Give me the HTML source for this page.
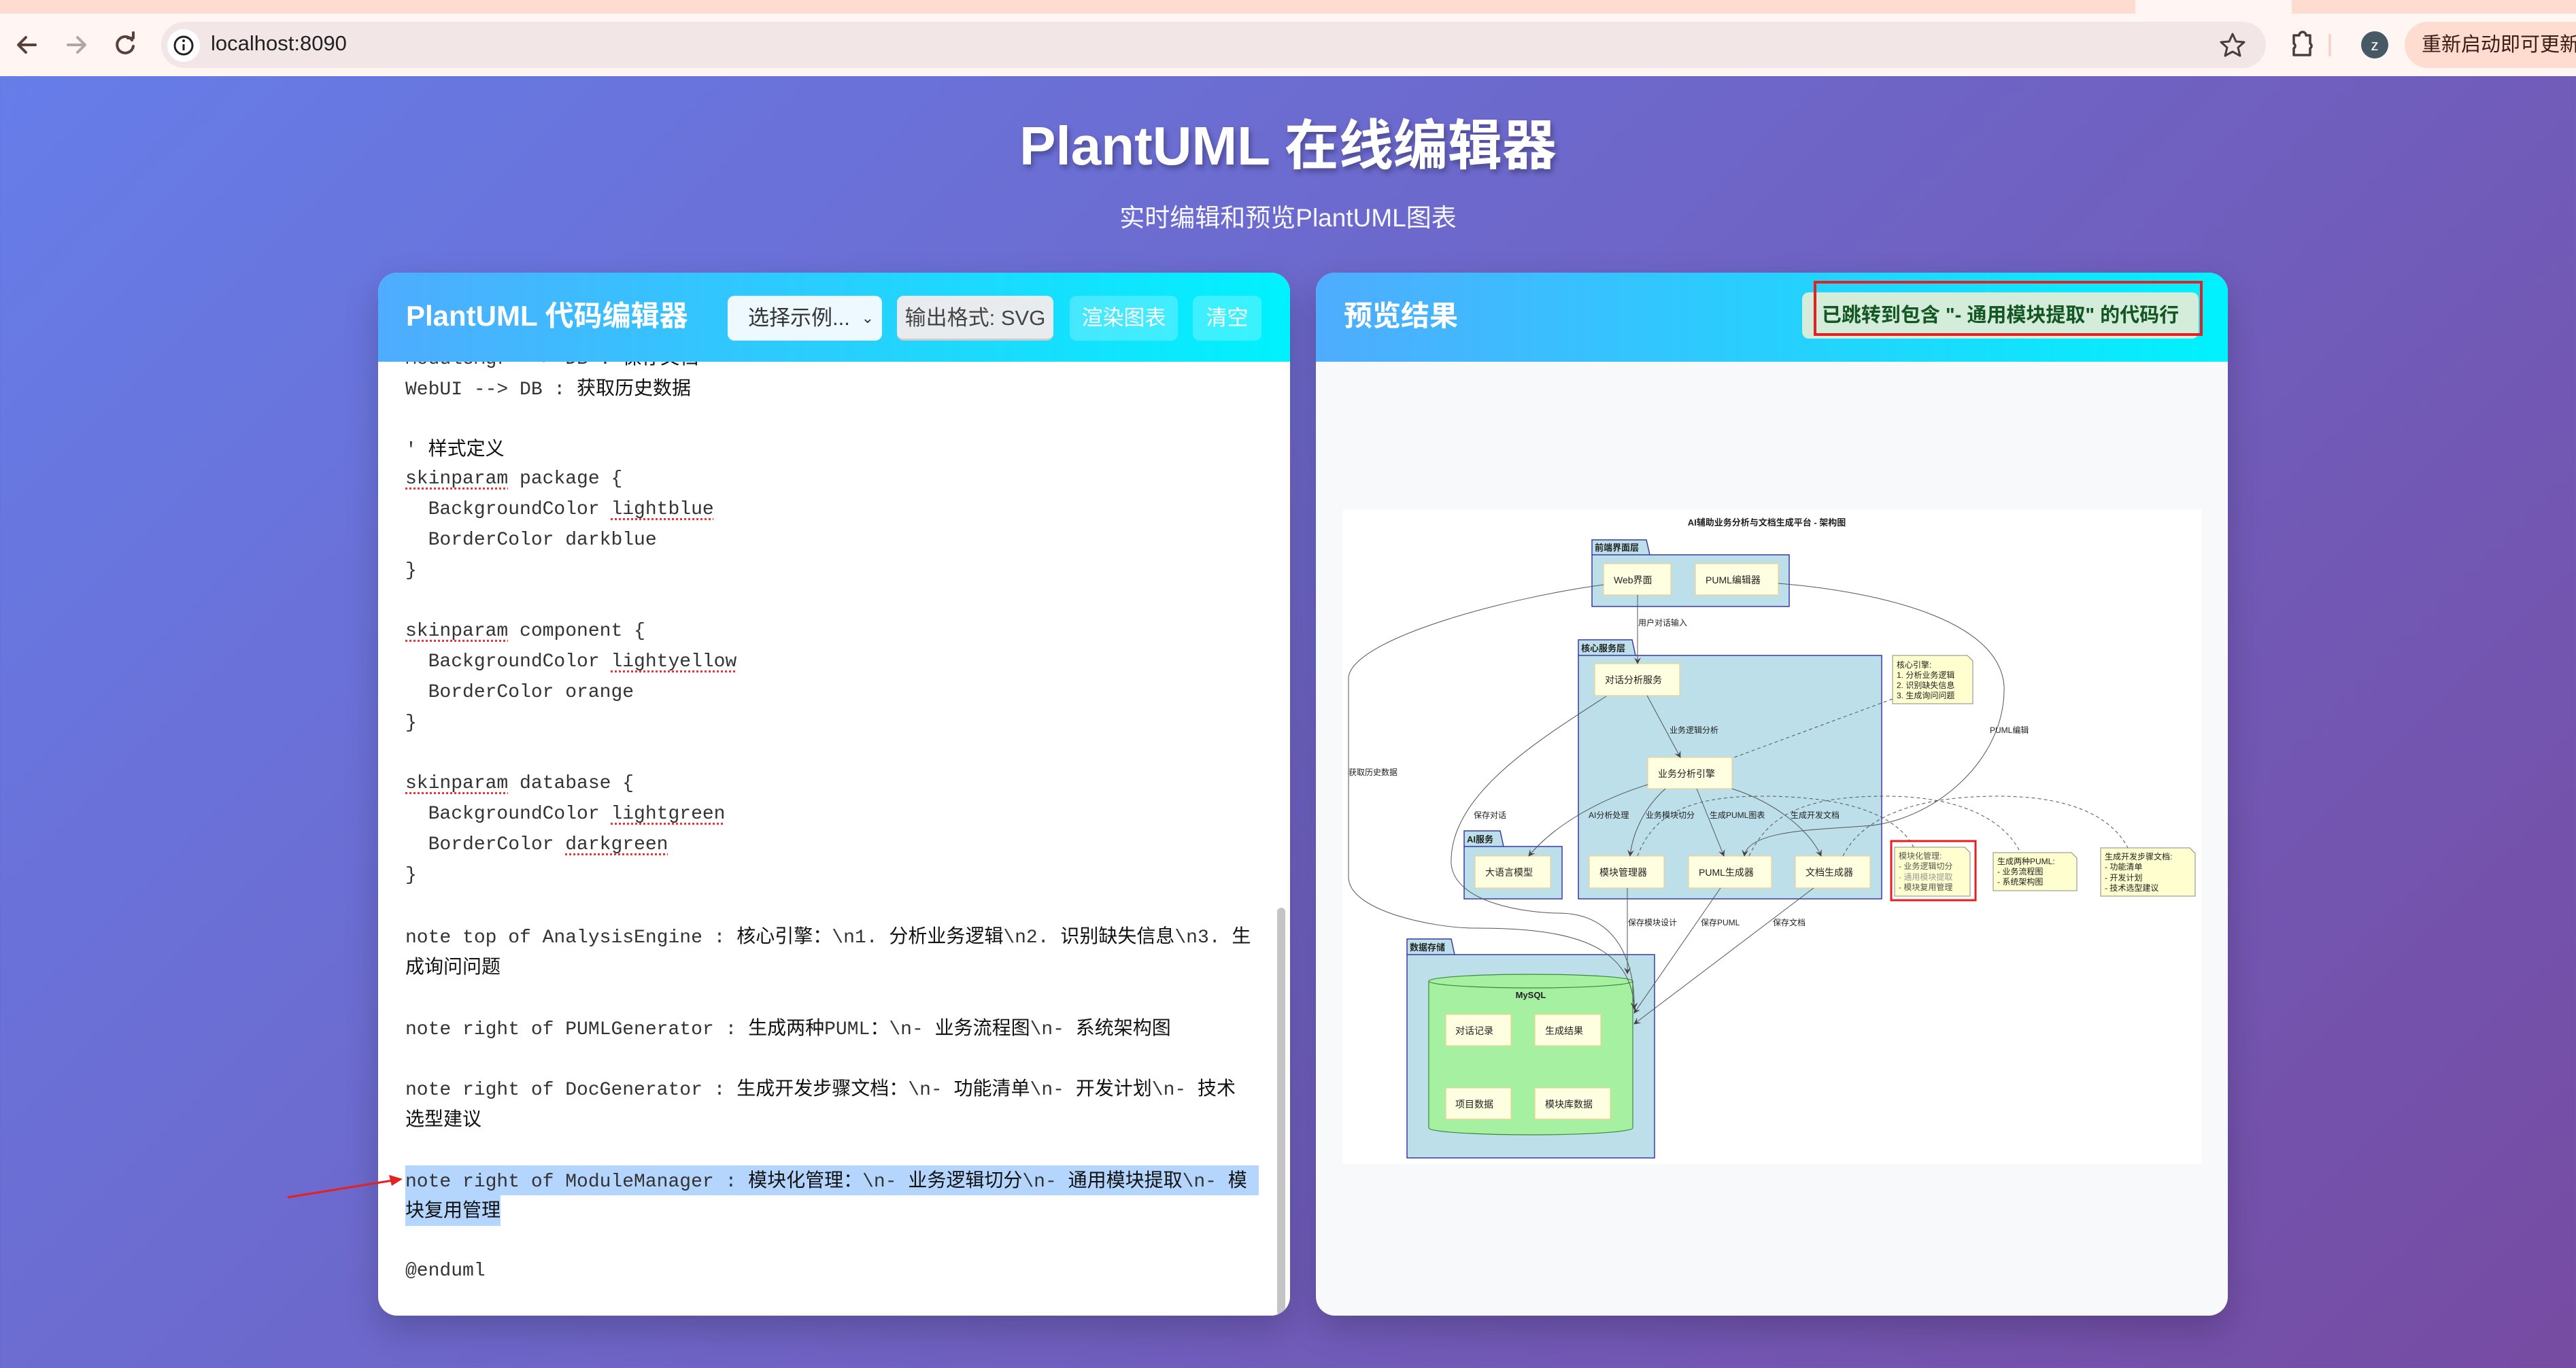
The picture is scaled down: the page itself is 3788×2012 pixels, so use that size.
<!DOCTYPE html>
<html><head><meta charset="utf-8">
<style>
*{margin:0;padding:0;box-sizing:border-box}
html,body{width:3788px;height:2012px;overflow:hidden}
body{position:relative;font-family:"Liberation Sans","Noto Sans CJK SC",sans-serif;background:linear-gradient(135deg,#667eea 0%,#764ba2 100%)}
.abs{position:absolute}
.tabs{left:0;top:0;width:3788px;height:20px;background:#fedcd0}
.toolbar{left:0;top:20px;width:3788px;height:92px;background:#fff6f4}
.url{left:237px;top:32px;width:3095px;height:68px;border-radius:34px;background:#f2e7e6}
.urltext{left:310px;top:46px;font-size:31px;color:#222}
.upd{left:3536px;top:32px;width:280px;height:68px;border-radius:34px;background:#fedcd0;color:#3a1c14;font-size:29px;line-height:68px;padding-left:25px}
h1{position:absolute;left:0;width:3788px;top:150px;text-align:center;color:#fff;font-size:80px;font-weight:bold;text-shadow:3px 5px 8px rgba(0,0,0,.3)}
.sub{left:0;width:3788px;top:290px;text-align:center;color:#fff;font-size:37px;opacity:.95}
.panel{top:401px;height:1534px;border-radius:28px;overflow:hidden;background:#fff;box-shadow:0 20px 50px rgba(0,0,0,.2)}
.ph{position:absolute;left:0;top:0;width:100%;height:131px;background:linear-gradient(90deg,#4facfe,#00f2fe)}
.pt{position:absolute;top:30px;color:#fff;font-size:42px;font-weight:bold}
.btn{position:absolute;top:34px;height:66px;border-radius:10px;font-size:31px;line-height:66px;text-align:center}
.code{position:absolute;left:40px;top:131px;width:1285px;height:1403px;overflow:hidden}
.lines{position:absolute;left:0;top:-28px;font-family:"Liberation Mono","Noto Sans CJK SC",monospace;font-size:28px;color:#333}
.lines div{height:44.8px;line-height:44.8px;white-space:pre;overflow:visible}
.cj{font-family:"Liberation Sans","Noto Sans CJK SC",sans-serif;color:#111}
.sq{text-decoration:underline dotted #e33;text-underline-offset:6px;text-decoration-thickness:3px}
.hl{background:#b4d5fe}
</style></head><body>
<div class="abs tabs"></div>
<div class="abs" style="left:3140px;top:0;width:230px;height:20px;background:#fff6f4"></div>
<div class="abs toolbar"></div>
<svg class="abs" style="left:0;top:20px" width="240" height="92">
<g fill="none" stroke-width="4" stroke-linecap="round" stroke-linejoin="round">
<path d="M52 46H28M38 35L27 46L38 57" stroke="#5a4038"/>
<path d="M100 46H124M114 35L125 46L114 57" stroke="#b0a6a4"/>
<path d="M194 39A12 12 0 1 0 196 48" stroke="#5a4038"/><path d="M188 36H196V28" stroke="#5a4038"/>
</g></svg>
<div class="abs url"></div>
<div class="abs" style="left:246px;top:43px;width:48px;height:48px;border-radius:24px;background:#fff"></div>
<svg class="abs" style="left:246px;top:43px" width="48" height="48"><circle cx="24" cy="24" r="13" fill="none" stroke="#222" stroke-width="3"/><path d="M24 22V31" stroke="#222" stroke-width="3"/><circle cx="24" cy="17" r="2" fill="#222"/></svg>
<div class="abs urltext">localhost:8090</div>
<svg class="abs" style="left:3260px;top:40px" width="260" height="52">
<path d="M23 10L28 21L40 22L31 30L34 42L23 36L12 42L15 30L6 22L18 21Z" fill="none" stroke="#4a3e3b" stroke-width="3" stroke-linejoin="round"/>
<path d="M113 12H121A5 5 0 0 1 131 12H137V24A4 4 0 0 1 137 31V41H113V31A4 4 0 0 0 113 24Z" fill="none" stroke="#4a3e3b" stroke-width="3.5" stroke-linejoin="round"/>
<rect x="164" y="10" width="4" height="33" rx="2" fill="#f6d6cc"/>
<circle cx="232" cy="26" r="20" fill="#455a64"/><text x="232" y="34" fill="#fff" font-size="22" text-anchor="middle" font-family="Liberation Sans">z</text>
</svg>
<div class="abs upd">重新启动即可更新</div>

<h1>PlantUML 在线编辑器</h1>
<div class="abs sub">实时编辑和预览PlantUML图表</div>

<div class="abs panel" style="left:556px;width:1341px">
 <div class="ph">
  <div class="pt" style="left:41px">PlantUML 代码编辑器</div>
  <div class="btn" style="left:514px;width:227px;background:#eef9ff;color:#333;text-align:left;padding-left:30px">选择示例...<span style="position:absolute;right:12px;font-size:22px">&#8964;</span></div>
  <div class="btn" style="left:763px;width:230px;background:#e9ecef;color:#444;border-bottom:3px solid #ccc">输出格式: SVG</div>
  <div class="btn" style="left:1017px;width:159px;background:rgba(255,255,255,.22);color:#fff">渲染图表</div>
  <div class="btn" style="left:1198px;width:101px;background:rgba(255,255,255,.22);color:#fff">清空</div>
 </div>
 <div class="code"><div class="lines">
<div>ModuleMgr --&gt; DB : <span class="cj">保存文档</span></div>
<div>WebUI --&gt; DB : <span class="cj">获取历史数据</span></div>
<div></div>
<div>' <span class="cj">样式定义</span></div>
<div><span class="sq">skinparam</span> package {</div>
<div>  BackgroundColor <span class="sq">lightblue</span></div>
<div>  BorderColor darkblue</div>
<div>}</div>
<div></div>
<div><span class="sq">skinparam</span> component {</div>
<div>  BackgroundColor <span class="sq">lightyellow</span></div>
<div>  BorderColor orange</div>
<div>}</div>
<div></div>
<div><span class="sq">skinparam</span> database {</div>
<div>  BackgroundColor <span class="sq">lightgreen</span></div>
<div>  BorderColor <span class="sq">darkgreen</span></div>
<div>}</div>
<div></div>
<div>note top of AnalysisEngine : <span class="cj">核心引擎：</span>\n1. <span class="cj">分析业务逻辑</span>\n2. <span class="cj">识别缺失信息</span>\n3. <span class="cj">生</span></div>
<div><span class="cj">成询问问题</span></div>
<div></div>
<div>note right of PUMLGenerator : <span class="cj">生成两种</span>PUML<span class="cj">：</span>\n- <span class="cj">业务流程图</span>\n- <span class="cj">系统架构图</span></div>
<div></div>
<div>note right of DocGenerator : <span class="cj">生成开发步骤文档：</span>\n- <span class="cj">功能清单</span>\n- <span class="cj">开发计划</span>\n- <span class="cj">技术</span></div>
<div><span class="cj">选型建议</span></div>
<div></div>
<div class="hl" style="width:1255px">note right of ModuleManager : <span class="cj">模块化管理：</span>\n- <span class="cj">业务逻辑切分</span>\n- <span class="cj">通用模块提取</span>\n- <span class="cj">模</span></div>
<div class="hl" style="width:140px"><span class="cj">块复用管理</span></div>
<div></div>
<div>@enduml</div>
</div></div>
 <div class="abs" style="left:1322px;top:934px;width:12px;height:600px;border-radius:6px;background:#c4c4c4"></div>
</div>

<div class="abs panel" style="left:1935px;width:1341px;background:#f8f9fa">
 <div class="ph">
  <div class="pt" style="left:41px">预览结果</div>
  <div class="abs" style="left:715px;top:29px;width:583px;height:68px;border-radius:10px;background:#d4edda;color:#155724;font-size:29px;font-weight:bold;line-height:68px;text-align:center">已跳转到包含 "- 通用模块提取" 的代码行</div>
  <div class="abs" style="left:732px;top:12px;width:572px;height:81px;border:4px solid #e52020"></div>
 </div>
</div>

<svg class="abs" style="left:1960px;top:740px" width="1300" height="980" font-family="Liberation Sans,Noto Sans CJK SC,sans-serif">
<defs><marker id="a" markerWidth="10" markerHeight="10" refX="9" refY="5" orient="auto" markerUnits="userSpaceOnUse"><path d="M0 0L10 5L0 10L4 5Z" fill="#444"/></marker></defs>
<rect x="15" y="9" width="1262" height="963" fill="#fff"/>
<text x="638" y="33" font-size="13" font-weight="bold" text-anchor="middle" fill="#222">AI辅助业务分析与文档生成平台 - 架构图</text>
<g fill="#bcdfe9" stroke="#3a3aa8" stroke-width="1.5">
<path d="M381 76V54H461L466 76"/><rect x="381" y="76" width="290" height="76"/>
<path d="M361 224V201H440L445 224"/><rect x="361" y="224" width="446" height="358"/>
<path d="M193 505V482H246L251 505"/><rect x="193" y="505" width="144" height="77"/>
<path d="M109 664V641H174L179 664"/><rect x="109" y="664" width="364" height="299"/>
</g>
<g font-size="13" font-weight="bold" fill="#222"><text x="385" y="70">前端界面层</text><text x="365" y="218">核心服务层</text><text x="197" y="499">AI服务</text><text x="113" y="658">数据存储</text></g>
<path d="M141 703V919A150 10 0 0 0 441 919V703" fill="#a6f0a2" stroke="#3a8a3a" stroke-width="1.2"/>
<ellipse cx="291" cy="703" rx="150" ry="10" fill="#a6f0a2" stroke="#3a8a3a" stroke-width="1.2"/>
<text x="291" y="728" font-size="13" font-weight="bold" text-anchor="middle" fill="#222">MySQL</text>
<g fill="#fefee0" stroke="#f0d090" stroke-width="1.2">
<rect x="398" y="89" width="99" height="46"/><rect x="533" y="89" width="122" height="46"/>
<rect x="385" y="236" width="125" height="47"/><rect x="463" y="374" width="124" height="46"/>
<rect x="377" y="519" width="110" height="47"/><rect x="523" y="519" width="122" height="47"/><rect x="680" y="519" width="110" height="47"/>
<rect x="209" y="519" width="111" height="47"/>
<rect x="166" y="752" width="96" height="46"/><rect x="297" y="752" width="97" height="46"/><rect x="166" y="860" width="96" height="46"/><rect x="297" y="860" width="111" height="46"/>
</g>
<g font-size="14" fill="#222"><text x="413" y="118">Web界面</text><text x="548" y="118">PUML编辑器</text><text x="400" y="265">对话分析服务</text><text x="478" y="403">业务分析引擎</text><text x="392" y="548">模块管理器</text><text x="538" y="548">PUML生成器</text><text x="695" y="548">文档生成器</text><text x="224" y="548">大语言模型</text><text x="180" y="781">对话记录</text><text x="312" y="781">生成结果</text><text x="180" y="889">项目数据</text><text x="312" y="889">模块库数据</text></g>
<g fill="#fefece" stroke="#888" stroke-width="1">
<path d="M823 224H933L941 232V295H823Z"/><path d="M826 506H929L937 514V578H826Z"/><path d="M971 514H1086L1094 522V570H971Z"/><path d="M1129 507H1260L1268 515V578H1129Z"/>
</g>
<rect x="821" y="497" width="124" height="87" fill="none" stroke="#e52020" stroke-width="3"/>
<g font-size="12" fill="#222"><text x="829" y="242">核心引擎:</text><text x="829" y="257">1. 分析业务逻辑</text><text x="829" y="272">2. 识别缺失信息</text><text x="829" y="287">3. 生成询问问题</text>
<text x="832" y="523" fill="#555">模块化管理:</text><text x="832" y="538" fill="#555">- 业务逻辑切分</text><text x="832" y="554" fill="#999">- 通用模块提取</text><text x="832" y="569" fill="#555">- 模块复用管理</text>
<text x="977" y="531">生成两种PUML:</text><text x="977" y="546">- 业务流程图</text><text x="977" y="561">- 系统架构图</text>
<text x="1135" y="524">生成开发步骤文档:</text><text x="1135" y="539">- 功能清单</text><text x="1135" y="555">- 开发计划</text><text x="1135" y="570">- 技术选型建议</text></g>
<g fill="none" stroke="#555" stroke-width="1" marker-end="url(#a)">
<path d="M448 135V236"/>
<path d="M462 283L511 374"/>
<path d="M463 414C380 440 320 480 288 519"/>
<path d="M489 420C455 450 440 490 437 519"/>
<path d="M535 420L575 519"/>
<path d="M587 420C650 440 700 480 718 519"/>
<path d="M398 120C250 140 30 200 23 256V550C23 600 150 625 207 625C330 625 440 640 443 744"/>
<path d="M402 284C300 350 170 430 174 531C180 590 290 603 332 603C420 603 445 680 443 744"/>
<path d="M655 118C800 130 980 170 987 269C990 380 880 470 780 475C720 480 610 480 605 519"/>
<path d="M433 566V692"/>
<path d="M570 566L443 750"/>
<path d="M707 566L443 766"/>
</g>
<g fill="none" stroke="#555" stroke-width="1" stroke-dasharray="5 4">
<path d="M823 288L590 374"/>
<path d="M448 519C470 460 520 431 630 431C760 431 830 460 854 506"/>
<path d="M612 519C640 460 690 431 812 431C930 431 990 470 1011 514"/>
<path d="M750 519C780 460 860 431 978 431C1100 431 1150 470 1169 507"/>
</g>
<g font-size="12" fill="#222"><text x="449" y="180">用户对话输入</text><text x="495" y="338">业务逻辑分析</text><text x="23" y="400">获取历史数据</text><text x="966" y="338">PUML编辑</text><text x="207" y="463">保存对话</text><text x="376" y="463">AI分析处理</text><text x="460" y="463">业务模块切分</text><text x="554" y="463">生成PUML图表</text><text x="673" y="463">生成开发文档</text><text x="434" y="621">保存模块设计</text><text x="541" y="621">保存PUML</text><text x="647" y="621">保存文档</text></g>
</svg>

<svg class="abs" style="left:400px;top:1720px" width="210" height="60"><path d="M23 41L178 16" stroke="#e52020" stroke-width="3"/><path d="M192 14L172 8L176 24Z" fill="#e52020"/></svg>
</body></html>
